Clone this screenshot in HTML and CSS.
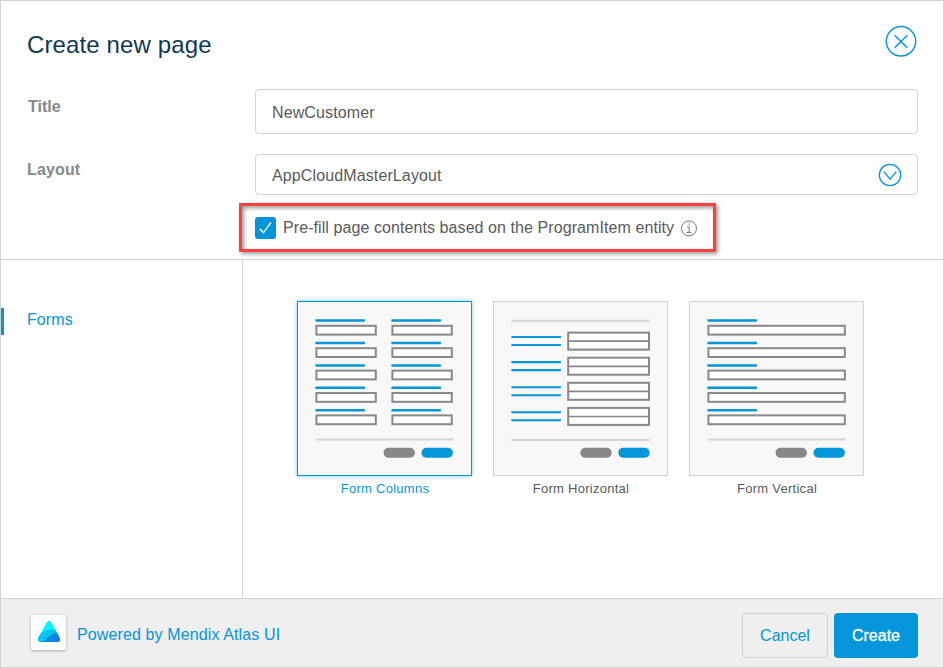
FILE: index.html
```
<!DOCTYPE html>
<html lang="en">
<head>
<meta charset="utf-8">
<title>Create new page</title>
<link rel="stylesheet" href="styles.css">
</head>
<body>
<main class="dialog">
  <header class="header">
    <h1 class="heading">Create new page</h1>
    <button class="close" aria-label="Close">
      <svg width="32" height="32" viewBox="0 0 32 32"><circle cx="16" cy="16.3" r="14.7"/><path d="M9.7 10.3l12.6 12.4M22.3 10.3L9.7 22.7"/></svg>
    </button>
  </header>
  <section class="fields">
    <div class="row row-title">
      <label class="label label-title" for="title">Title</label>
      <div class="control" id="title">NewCustomer</div>
    </div>
    <div class="row row-layout">
      <label class="label label-layout" for="layout">Layout</label>
      <div class="control control-select" id="layout">
        <span>AppCloudMasterLayout</span>
        <svg class="chevron" width="24" height="24" viewBox="0 0 24 24"><circle cx="12" cy="12" r="10.7"/><path d="M5.9 8.7l6.2 7.5 6.2-7.5"/></svg>
      </div>
    </div>
    <div class="prefill">
      <svg class="checkbox" width="21" height="22" viewBox="0 0 21 22"><rect width="21" height="22" rx="3"/><path d="M4.8 11.8l3.6 4L16 5.5"/></svg>
      <span class="prefill-text">Pre-fill page contents based on the ProgramItem entity</span>
      <svg class="info" width="18" height="18" viewBox="0 0 18 18"><circle cx="9" cy="9.4" r="7.5"/><path d="M7 7.9h2.2v5.3M6.4 13.4h5.2M9 4.6v1.5"/></svg>
    </div>
  </section>
  <section class="body">
    <nav class="sidebar"><a class="nav-item">Forms</a></nav>
    <div class="templates">
      <figure class="template selected">
        <svg class="thumb" viewBox="1 1 173 173">
          <defs>
            <g id="field"><path class="accent" d="M18.4 19.6h49.5"/><rect class="box" x="19.4" y="24.8" width="59.4" height="8.8"/></g>
            <g id="wide"><path class="accent" d="M18.4 19.6h49.5"/><rect class="box" x="19.4" y="24.8" width="136.4" height="8.8"/></g>
            <g id="pair"><path class="accent thin" d="M18.4 36h49.5M18.4 44h49.5"/><rect class="box" x="75.2" y="31.6" width="80.8" height="17"/><path class="split" d="M75 40.2h81"/></g>
            <g id="actions"><rect class="muted" x="86.5" y="146.7" width="31.4" height="10" rx="5"/><rect class="primary" x="124.5" y="146.7" width="31.4" height="10" rx="5"/></g>
          </defs>
          <use href="#field"/><use href="#field" y="22.4"/><use href="#field" y="44.8"/><use href="#field" y="67.2"/><use href="#field" y="89.6"/>
          <use href="#field" x="76"/><use href="#field" x="76" y="22.4"/><use href="#field" x="76" y="44.8"/><use href="#field" x="76" y="67.2"/><use href="#field" x="76" y="89.6"/>
          <path class="rule" d="M18.4 138.4h138"/><use href="#actions"/>
        </svg>
        <figcaption>Form Columns</figcaption>
      </figure>
      <figure class="template">
        <svg class="thumb" viewBox="1 1 173 173">
          <path class="rule" d="M18.4 19.8h138.2M18.4 139.1h138.2"/>
          <use href="#pair"/><use href="#pair" y="25.1"/><use href="#pair" y="50.2"/><use href="#pair" y="75.3"/>
          <use href="#actions" x="0.8"/>
        </svg>
        <figcaption>Form Horizontal</figcaption>
      </figure>
      <figure class="template">
        <svg class="thumb" viewBox="1 1 173 173">
          <use href="#wide"/><use href="#wide" y="22.4"/><use href="#wide" y="44.8"/><use href="#wide" y="67.2"/><use href="#wide" y="89.6"/>
          <path class="rule" d="M18.4 138.4h138"/><use href="#actions"/>
        </svg>
        <figcaption>Form Vertical</figcaption>
      </figure>
    </div>
  </section>
  <footer class="footer">
    <div class="logo">
      <svg width="35" height="35" viewBox="0 0 35 35">
        <defs>
          <clipPath id="peak"><path d="M15.8 7.2Q18 4.2 20.2 7.2L28.6 22.8Q30 26.5 26.8 26.9H9.6Q5.8 26.5 7.3 22.8Z"/></clipPath>
          <linearGradient id="deep"><stop offset="0" stop-color="#0b8eea"/><stop offset="1" stop-color="#127be0"/></linearGradient>
        </defs>
        <g clip-path="url(#peak)"><rect class="sky" width="35" height="35"/><path class="mid" d="M5 22Q12 14 25 14L32 28H5Z"/><path d="M11 28Q16 21 28 16.5L33 28Z" fill="url(#deep)"/></g>
      </svg>
    </div>
    <a class="powered">Powered by Mendix Atlas UI</a>
    <button class="btn btn-cancel">Cancel</button>
    <button class="btn btn-create">Create</button>
  </footer>
</main>
</body>
</html>
```
FILE: styles.css
```
* { box-sizing: border-box; }
body {
  margin: 0;
  font-family: "Liberation Sans", Arial, sans-serif;
  font-size: 16px;
  line-height: 20px;
  color: #595959;
  background: #fff;
}
button { font: inherit; }
.dialog {
  width: 944px;
  height: 668px;
  border: 1px solid #d2d2d2;
  display: flex;
  flex-direction: column;
}
.header {
  height: 88px;
  padding: 24px 26px 0;
  display: flex;
  justify-content: space-between;
  align-items: flex-start;
}
.heading {
  margin: 5px 0 0;
  font-size: 24px;
  line-height: 30px;
  font-weight: 400;
  letter-spacing: 0.13px;
  color: #0f3a52;
}
.close { border: 0; padding: 0; background: none; height: 32px; width: 32px; }
.close svg, .chevron, .info { display: block; fill: none; stroke: #0595db; stroke-width: 1.5; }
.fields { height: 171px; border-bottom: 1px solid #d2d2d2; }
.row { display: flex; padding: 0 25px 0 26px; }
.row-title { margin-bottom: 20px; }
.label { width: 228px; font-weight: 700; color: #888; }
.label-title { padding: 8px 0 0 1px; }
.label-layout { padding-top: 6px; letter-spacing: 0.15px; }
.control {
  flex: 1;
  height: 45px;
  border: 1px solid #d2d2d2;
  border-radius: 4px;
  padding: 2px 15px 0 16px;
  display: flex;
  align-items: center;
  justify-content: space-between;
  letter-spacing: 0.12px;
}
.control-select { height: 41px; }
.chevron { stroke-width: 1.3; margin-top: -2px; }
.prefill {
  width: 477px;
  height: 49px;
  margin: 8px 0 0 238px;
  padding: 0 0 0 13px;
  border: 3px solid #fb4040;
  box-shadow: 2px 2px 4px rgba(0,0,0,.4), inset 2px 2px 4px rgba(0,0,0,.4);
  display: flex;
  align-items: center;
}
.checkbox { fill: #0595db; }
.checkbox path { fill: none; stroke: #fff; stroke-width: 1.3; }
.prefill-text { margin-left: 7px; white-space: nowrap; letter-spacing: 0.08px; }
.info { margin-left: 6px; stroke: #777; stroke-width: 1; }
.body { height: 338px; display: flex; }
.sidebar { width: 242px; border-right: 1px solid #d2d2d2; padding-top: 48px; }
.nav-item {
  display: block;
  height: 27px;
  line-height: 23px;
  border-left: 3px solid #0595db;
  padding-left: 23px;
  letter-spacing: 0.1px;
  color: #0595db;
}
.templates { display: flex; gap: 21px; padding: 41px 0 0 54px; align-items: flex-start; }
.template { margin: 0; width: 175px; }
.thumb {
  display: block;
  width: 175px;
  height: 175px;
  border: 1px solid #d2d2d2;
  background: #f8f8f8;
}
.template figcaption {
  font-size: 13px;
  line-height: 17px;
  letter-spacing: 0.27px;
  text-align: center;
  padding: 4px 0 0 1px;
}
.selected .thumb { border-color: #0595db; box-shadow: 0 0 4px rgba(5,149,219,.55); }
.selected figcaption { color: #0595db; }
.accent { stroke: #0595db; stroke-width: 2.5; }
.accent.thin { stroke-width: 2.1; }
.box { fill: #fff; stroke: #888; stroke-width: 2; }
.split { stroke: #888; stroke-width: 1.7; }
.rule { stroke: #d6d6d6; stroke-width: 2; }
.muted { fill: #888; }
.primary { fill: #0595db; }
.footer {
  flex: 1;
  border-top: 1px solid #d2d2d2;
  background: #efefef;
  padding: 0 25px 0 30px;
  display: flex;
  align-items: center;
}
.logo {
  width: 35px;
  height: 35px;
  margin: 0 11px 1px 0;
  border-radius: 2px;
  background: #fff;
  box-shadow: 0 1px 3px rgba(0,0,0,.3);
}
.logo svg { display: block; }
.sky { fill: #05f4fa; }
.mid { fill: #0dc4ef; }
.powered { flex: 1; color: #0595db; letter-spacing: 0.12px; padding-top: 3px; }
.btn { height: 45px; border-radius: 4px; padding: 0; margin-top: 5px; }
.btn-cancel { width: 86px; border: 1px solid #d2d2d2; background: transparent; color: #0595db; margin-right: 6px; }
.btn-create { width: 84px; border: 0; background: #0595db; color: #fff; -webkit-text-stroke: 0.3px #fff; }
```
